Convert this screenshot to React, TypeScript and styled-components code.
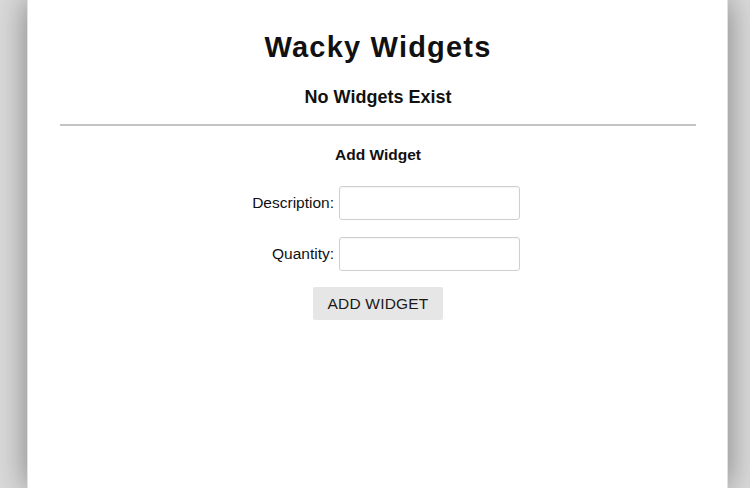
import React from "react";
import styled, { createGlobalStyle } from "styled-components";

const Global = createGlobalStyle`
  html, body {
    margin: 0;
    padding: 0;
    height: 488px;
    overflow: hidden;
    background: #dadada;
  }
  #root { height: 100%; }
`;

const Page = styled.div`
  height: 100%;
  display: flex;
`;

const Panel = styled.main`
  margin-left: 27px;
  width: 701px;
  height: 100%;
  background: #fff;
  border-left: 1px solid #e2e2e2;
  border-right: 1px solid #e2e2e2;
  box-shadow: 0 0 30px 0 rgba(0, 0, 0, 0.42);
  padding: 30px 31px 0 32px;
  box-sizing: border-box;
  font-family: "Liberation Sans", Arial, Helvetica, sans-serif;
  color: #111;
  display: flex;
  flex-direction: column;
  align-items: center;
`;

const Title = styled.h1`
  margin: 0;
  font-size: 29px;
  letter-spacing: 1.2px;
  font-weight: 700;
  line-height: 34px;
`;

const Subtitle = styled.h2`
  margin: 22px 0 0;
  font-size: 18px;
  font-weight: 700;
  line-height: 22px;
`;

const Rule = styled.hr`
  align-self: stretch;
  margin: 16px 0 0;
  border: none;
  border-top: 2px solid #c4c4c4;
  height: 0;
`;

const SectionTitle = styled.h4`
  margin: 20px 0 0;
  font-size: 15.5px;
  font-weight: 700;
  line-height: 18px;
`;

const Form = styled.form`
  margin: 22px 0 0;
  display: grid;
  grid-template-columns: 98px 181px;
  column-gap: 5px;
  row-gap: 17px;
  align-items: center;
  justify-items: end;
`;

const Label = styled.label`
  font-size: 15.5px;
  color: #111;
  text-align: right;
`;

const Input = styled.input`
  justify-self: stretch;
  width: 181px;
  height: 34px;
  box-sizing: border-box;
  border: 1px solid #cfcfcf;
  border-radius: 3px;
  background: #fff;
  box-shadow: inset 0 1px 1px rgba(0, 0, 0, 0.04);
  font-family: inherit;
  font-size: 15px;
  padding: 0 6px;
  outline: none;
`;

const Button = styled.button`
  margin-top: 16px;
  width: 130px;
  height: 33px;
  border: none;
  border-radius: 2px;
  background: #e6e6e6;
  color: #1a1a1a;
  font-family: "Liberation Sans", Arial, Helvetica, sans-serif;
  font-size: 15.5px;
  letter-spacing: 0.2px;
  cursor: pointer;
`;

export default function App() {
  return (
    <>
      <Global />
      <Page>
        <Panel>
          <Title>Wacky Widgets</Title>
          <Subtitle>No Widgets Exist</Subtitle>
          <Rule />
          <SectionTitle>Add Widget</SectionTitle>
          <Form onSubmit={(e) => e.preventDefault()}>
            <Label htmlFor="desc">Description:</Label>
            <Input id="desc" type="text" />
            <Label htmlFor="qty">Quantity:</Label>
            <Input id="qty" type="text" />
          </Form>
          <Button type="button">ADD WIDGET</Button>
        </Panel>
      </Page>
    </>
  );
}
